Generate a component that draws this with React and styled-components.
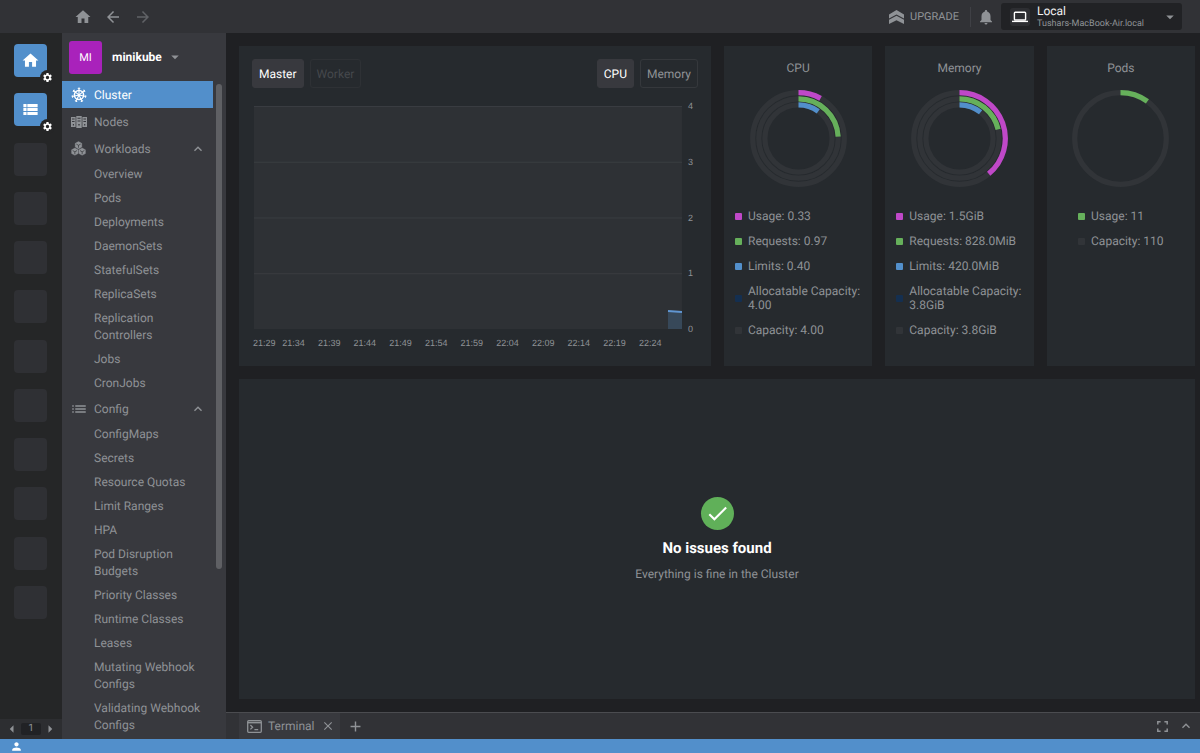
import React, { useState } from 'react';
import styled, { createGlobalStyle } from 'styled-components';
import {
  MdHome,
  MdArrowBack,
  MdArrowForward,
  MdNotifications,
  MdArrowDropDown,
  MdArrowLeft,
  MdArrowRight,
  MdSettings,
  MdViewList,
  MdList,
  MdExpandLess,
  MdAdd,
  MdClose,
  MdPerson,
  MdCheck,
} from 'react-icons/md';

const GlobalStyle = createGlobalStyle`
  * {
    box-sizing: border-box;
  }

  body {
    margin: 0;
    background: #1f2023;
    color: #8f9296;
    font-family: Roboto, "Liberation Sans", sans-serif;
    font-size: 12px;
    text-rendering: geometricPrecision;
  }

  button {
    border: 0;
    padding: 0;
    background: none;
    color: inherit;
    font: inherit;
    text-rendering: inherit;
    cursor: pointer;
  }

  ul {
    list-style: none;
    margin: 0;
    padding: 0;
  }

  svg {
    display: block;
    flex: none;
  }
`;

const workloads = ['Overview', 'Pods', 'Deployments', 'DaemonSets', 'StatefulSets', 'ReplicaSets', 'Replication Controllers', 'Jobs', 'CronJobs'];
const config = ['ConfigMaps', 'Secrets', 'Resource Quotas', 'Limit Ranges', 'HPA', 'Pod Disruption Budgets', 'Priority Classes', 'Runtime Classes', 'Leases', 'Mutating Webhook Configs', 'Validating Webhook Configs'];
const times = ['21:29', '21:34', '21:39', '21:44', '21:49', '21:54', '21:59', '22:04', '22:09', '22:14', '22:19', '22:24'];

const colors = {
  usage: '#bf48c8',
  requests: '#66b05b',
  limits: '#528fcb',
  allocatable: '#142f50',
  capacity: '#313438',
};

const gauges = [
  {
    title: 'CPU',
    rings: [[colors.usage, 0.08], [colors.requests, 0.2425], [colors.limits, 0.1]],
    legend: [
      [colors.usage, 'Usage: 0.33'],
      [colors.requests, 'Requests: 0.97'],
      [colors.limits, 'Limits: 0.40'],
      [colors.allocatable, 'Allocatable Capacity: 4.00'],
      [colors.capacity, 'Capacity: 4.00'],
    ],
  },
  {
    title: 'Memory',
    rings: [[colors.usage, 0.39], [colors.requests, 0.213], [colors.limits, 0.108]],
    legend: [
      [colors.usage, 'Usage: 1.5GiB'],
      [colors.requests, 'Requests: 828.0MiB'],
      [colors.limits, 'Limits: 420.0MiB'],
      [colors.allocatable, 'Allocatable Capacity: 3.8GiB'],
      [colors.capacity, 'Capacity: 3.8GiB'],
    ],
  },
  {
    title: 'Pods',
    rings: [[colors.requests, 0.1]],
    legend: [
      [colors.requests, 'Usage: 11'],
      [colors.capacity, 'Capacity: 110'],
    ],
  },
];

function HelmIcon() {
  const spokes = [0, 1, 2, 3, 4, 5, 6];
  return (
    <svg width="16" height="16" viewBox="0 0 16 16" fill="none" stroke="currentColor">
      <circle cx="8" cy="8" r="4.6" strokeWidth="1.5" />
      <circle cx="8" cy="8" r="1.3" fill="currentColor" stroke="none" />
      {spokes.map((n) => (
        <path key={n} d="M8 7V1M7.2 1.2h1.6" strokeWidth="1.1" strokeLinecap="round" transform={`rotate(${(n * 360) / 7} 8 8)`} />
      ))}
    </svg>
  );
}

function NodesIcon() {
  return (
    <svg width="16" height="12" viewBox="0 0 16 12" fill="currentColor" fillRule="evenodd">
      <path d="M0 1h4.6v10H0zM1 2.6v1h2.6v-1zM1 5v1h2.6V5zM1.8 8v1.4h1.2V8z" />
      <path d="M5.3 0h5.4v12H5.3zM6.5 1.8v1h3v-1zM6.5 4.4v1h3v-1zM7.3 8v1.6h1.4V8z" />
      <path d="M11.4 1H16v10h-4.6zM12.4 2.6v1H15v-1zM12.4 5v1H15V5zM13.1 8v1.4h1.2V8z" />
    </svg>
  );
}

function WorkloadsIcon() {
  const cubes = [[8, 4], [4.1, 10.9], [11.9, 10.9]];
  return (
    <svg width="15" height="15" viewBox="0 0 16 15">
      {cubes.map(([x, y]) => (
        <g key={x} transform={`translate(${x} ${y})`}>
          <path d="M0-3.9 3.5-2v4L0 3.9-3.5 2v-4z" fill="currentColor" stroke="currentColor" strokeWidth=".4" strokeLinejoin="round" />
          <path d="M-2.3-1.2 0 .1l2.3-1.3M0 .1v2.6" fill="none" stroke="#38393e" strokeWidth=".8" />
        </g>
      ))}
    </svg>
  );
}

function UpgradeIcon() {
  return (
    <svg width="15" height="14" viewBox="0 0 15 14" fill="currentColor">
      <path d="M7.5 0 15 4.4v4.2L7.5 4.6 0 8.6V4.4z" />
      <path d="M7.5 5.8 15 9.8V14l-7.5-3.8L0 14V9.8z" />
    </svg>
  );
}

function LaptopIcon() {
  return (
    <svg width="16" height="12" viewBox="0 0 16 12" fill="none" stroke="currentColor" strokeWidth="1.4">
      <rect x="2.4" y="1.2" width="11.2" height="7.8" rx=".8" />
      <path d="M0 10.4h16" />
    </svg>
  );
}

function TerminalIcon() {
  return (
    <svg width="15" height="13" viewBox="0 0 15 13" fill="none" stroke="currentColor" strokeWidth="1.3">
      <rect x=".7" y=".7" width="13.6" height="11.6" rx="1" />
      <path d="M.7 2.6h13.6" strokeWidth="1.6" />
      <path d="m3.4 5 2.2 2.2-2.2 2.2M7.4 9.6h3.8" />
    </svg>
  );
}

function FullscreenIcon() {
  return (
    <svg width="11" height="11" viewBox="0 0 11 11" fill="none" stroke="currentColor" strokeWidth="1.5">
      <path d="M.8 3.6V.8h2.8M7.4.8h2.8v2.8M10.2 7.4v2.8H7.4M3.6 10.2H.8V7.4" />
    </svg>
  );
}

function Donut({ rings }) {
  return (
    <svg width="97" height="97" viewBox="-48.5 -48.5 97 97" fill="none" strokeWidth="5.2">
      {rings.map(([color, value], i) => {
        const r = 45.8 - i * 6.1;
        const a = value * Math.PI * 2;
        return (
          <g key={color}>
            <circle r={r} stroke={colors.capacity} />
            <path d={`M0 ${-r}A${r} ${r} 0 0 1 ${r * Math.sin(a)} ${-r * Math.cos(a)}`} stroke={color} />
          </g>
        );
      })}
    </svg>
  );
}

function Group({ icon, title, items }) {
  const [open, setOpen] = useState(true);
  return (
    <li>
      <NavItem onClick={() => setOpen(!open)} aria-expanded={open}>
        <NavIcon>{icon}</NavIcon>
        {title}
        <Chevron size={16} />
      </NavItem>
      {open && (
        <ul>
          {items.map((item) => (
            <li key={item}>
              <SubLink href="#">{item}</SubLink>
            </li>
          ))}
        </ul>
      )}
    </li>
  );
}

function App() {
  const [role, setRole] = useState('Master');
  const [metric, setMetric] = useState('CPU');

  return (
    <Shell>
      <GlobalStyle />
      <TopBar>
        <History>
          <IconButton aria-label="Home"><MdHome size={18} /></IconButton>
          <IconButton aria-label="Back"><MdArrowBack size={18} /></IconButton>
          <IconButton aria-label="Forward" $dim><MdArrowForward size={18} /></IconButton>
        </History>
        <Upgrade>
          <UpgradeIcon />
          UPGRADE
        </Upgrade>
        <Divider />
        <IconButton aria-label="Notifications"><MdNotifications size={18} /></IconButton>
        <Device>
          <DeviceIcon><LaptopIcon /></DeviceIcon>
          <DeviceText>
            <strong>Local</strong>
            <small>Tushars-MacBook-Air.local</small>
          </DeviceText>
          <MdArrowDropDown size={18} />
        </Device>
      </TopBar>

      <Body>
        <Hotbar>
          <Tiles>
            <Tile $active aria-label="Catalog">
              <MdHome size={19} />
              <Badge><MdSettings size={11} /></Badge>
            </Tile>
            <Tile $active aria-label="Cluster list">
              <MdViewList size={19} />
              <Badge><MdSettings size={11} /></Badge>
            </Tile>
            {[...Array(10)].map((_, i) => (
              <Tile key={i} aria-label="Empty slot" />
            ))}
          </Tiles>
          <Pager>
            <IconButton aria-label="Previous"><MdArrowLeft size={18} /></IconButton>
            <PageNumber>1</PageNumber>
            <IconButton aria-label="Next"><MdArrowRight size={18} /></IconButton>
          </Pager>
        </Hotbar>

        <Sidebar>
          <ClusterHeader>
            <Avatar>MI</Avatar>
            minikube
            <MdArrowDropDown size={18} />
          </ClusterHeader>
          <NavArea>
            <NavList>
              <li>
                <NavItem $active>
                  <NavIcon><HelmIcon /></NavIcon>
                  Cluster
                </NavItem>
              </li>
              <li>
                <NavItem>
                  <NavIcon><NodesIcon /></NavIcon>
                  Nodes
                </NavItem>
              </li>
              <Group icon={<WorkloadsIcon />} title="Workloads" items={workloads} />
              <Group icon={<MdList size={18} />} title="Config" items={config} />
            </NavList>
            <Track>
              <Thumb />
            </Track>
          </NavArea>
        </Sidebar>

        <Main>
          <Dashboard>
            <Card>
              <Toolbar>
                <Toggle $on={role === 'Master'} onClick={() => setRole('Master')}>Master</Toggle>
                <Toggle disabled>Worker</Toggle>
                <Spacer />
                <Toggle $on={metric === 'CPU'} onClick={() => setMetric('CPU')}>CPU</Toggle>
                <Toggle $on={metric === 'Memory'} onClick={() => setMetric('Memory')}>Memory</Toggle>
              </Toolbar>
              <Chart>
                <Plot viewBox="0 0 428 224" preserveAspectRatio="none">
                  <rect width="428" height="224" fill="#2e3135" />
                  <path d="M0 .5h428M0 56.5h428M0 112.5h428M0 168.5h428" stroke="#3a3d41" />
                  <path d="M414 206h14v18h-14z" fill="#374859" />
                  <path d="M414 206l14 1" stroke="#6096d2" strokeWidth="2" />
                </Plot>
                <YAxis>
                  {[4, 3, 2, 1, 0].map((n) => <span key={n}>{n}</span>)}
                </YAxis>
                <XAxis>
                  {times.map((t) => <span key={t}>{t}</span>)}
                </XAxis>
              </Chart>
            </Card>

            {gauges.map((gauge) => (
              <GaugeCard key={gauge.title}>
                <GaugeTitle>{gauge.title}</GaugeTitle>
                <Donut rings={gauge.rings} />
                <Legend>
                  {gauge.legend.map(([color, text]) => (
                    <LegendItem key={text} $color={color}>{text}</LegendItem>
                  ))}
                </Legend>
              </GaugeCard>
            ))}

            <Issues>
              <CheckCircle><MdCheck size={25} /></CheckCircle>
              <h2>No issues found</h2>
              <p>Everything is fine in the Cluster</p>
            </Issues>
          </Dashboard>

          <Dock>
            <DockTab>
              <TerminalIcon />
              Terminal
              <IconButton aria-label="Close tab"><MdClose size={14} /></IconButton>
            </DockTab>
            <IconButton aria-label="New tab"><MdAdd size={17} /></IconButton>
            <Spacer />
            <DockActions>
              <IconButton aria-label="Fullscreen"><FullscreenIcon /></IconButton>
              <IconButton aria-label="Expand"><MdExpandLess size={16} /></IconButton>
            </DockActions>
          </Dock>
        </Main>
      </Body>

      <StatusBar>
        <MdPerson size={13} />
      </StatusBar>
    </Shell>
  );
}

const Shell = styled.div`
  display: flex;
  flex-direction: column;
  height: 100vh;
  overflow: hidden;
`;

const TopBar = styled.header`
  display: flex;
  align-items: center;
  flex: none;
  height: 33px;
  padding-right: 18px;
  background: #313236;
`;

const History = styled.div`
  display: flex;
  gap: 12px;
  flex: 1;
  padding-left: 74px;
`;

const IconButton = styled.button`
  display: flex;
  align-items: center;
  justify-content: center;
  opacity: ${(props) => (props.$dim ? 0.5 : 1)};
`;

const Upgrade = styled.button`
  display: flex;
  align-items: center;
  gap: 6px;
  font-size: 11px;
`;

const Divider = styled.div`
  width: 1px;
  height: 20px;
  margin: 0 6px 0 11px;
  background: #3f4045;
`;

const Device = styled.button`
  display: flex;
  align-items: center;
  width: 181px;
  height: 27px;
  margin-left: 6px;
  padding: 0 3px 0 9px;
  border-radius: 3px;
  background: #212225;
  text-align: left;
`;

const DeviceIcon = styled.span`
  display: flex;
  align-items: center;
  justify-content: center;
  width: 20px;
  height: 18px;
  border-radius: 3px;
  background: #2d2e32;
  color: #fff;
`;

const DeviceText = styled.span`
  display: flex;
  flex-direction: column;
  flex: 1;
  padding-left: 7px;

  strong {
    color: #f0f0f0;
    font-size: 12px;
    font-weight: 400;
    line-height: 14px;
  }

  small {
    font-size: 9px;
    line-height: 12px;
  }
`;

const Body = styled.div`
  display: flex;
  flex: 1;
  min-height: 0;
`;

const Hotbar = styled.aside`
  display: flex;
  flex-direction: column;
  justify-content: space-between;
  flex: none;
  width: 62px;
  background: #252627;
`;

const Tiles = styled.div`
  display: flex;
  flex-direction: column;
  justify-content: space-between;
  height: 586px;
  padding: 11px 0 0 14px;
`;

const Tile = styled.button`
  position: relative;
  display: flex;
  align-items: center;
  justify-content: center;
  width: 33px;
  height: 33px;
  border-radius: 4px;
  background: ${(props) => (props.$active ? '#528fcb' : '#2f3034')};
  color: #fff;
`;

const Badge = styled.span`
  position: absolute;
  right: -8px;
  bottom: -8px;
  padding: 2px;
  border-radius: 50%;
  background: #252627;
`;

const Pager = styled.div`
  display: flex;
  align-items: center;
  justify-content: center;
  height: 20px;
  background: #2d2e31;
`;

const PageNumber = styled.span`
  width: 20px;
  border-radius: 2px;
  background: #212225;
  font-size: 10px;
  line-height: 12px;
  text-align: center;
`;

const Sidebar = styled.aside`
  display: flex;
  flex-direction: column;
  flex: none;
  width: 164px;
  background: #38393e;
`;

const ClusterHeader = styled.button`
  display: flex;
  align-items: center;
  flex: none;
  height: 48px;
  padding-left: 7px;
  color: #fff;
  font-weight: 700;

  > svg {
    margin-left: 4px;
    color: #8f9296;
  }
`;

const Avatar = styled.span`
  width: 33px;
  margin-right: 10px;
  border-radius: 3px;
  background: #a922bb;
  font-size: 11px;
  font-weight: 400;
  line-height: 33px;
`;

const NavArea = styled.nav`
  display: flex;
  flex: 1;
  min-height: 0;
  overflow: hidden;
`;

const NavList = styled.ul`
  flex: 1;
  min-width: 0;
`;

const NavItem = styled.button`
  display: flex;
  align-items: center;
  width: 100%;
  height: 27px;
  padding: 0 7px 0 8px;
  background: ${(props) => (props.$active ? '#528fcb' : 'none')};
  color: ${(props) => (props.$active ? '#fff' : 'inherit')};
`;

const NavIcon = styled.span`
  display: flex;
  justify-content: center;
  width: 17px;
  margin-right: 7px;
`;

const Chevron = styled(MdExpandLess)`
  margin-left: auto;
`;

const SubLink = styled.a`
  display: block;
  padding: 4px 12px 3px 32px;
  color: inherit;
  line-height: 17px;
  text-decoration: none;
`;

const Track = styled.div`
  width: 13px;
  padding: 3px 4px 0 3px;
`;

const Thumb = styled.div`
  height: 74%;
  border-radius: 3px;
  background: #5f6064;
`;

const Main = styled.main`
  display: flex;
  flex-direction: column;
  flex: 1;
  min-width: 0;
`;

const Dashboard = styled.div`
  display: grid;
  grid-template-columns: 35fr 11fr 11fr 11fr;
  grid-template-rows: repeat(2, minmax(0, 1fr));
  gap: 13px;
  flex: 1;
  min-height: 0;
  padding: 13px 5px 13px 13px;
`;

const Card = styled.section`
  display: flex;
  flex-direction: column;
  min-width: 0;
  padding: 13px;
  background: #262a2e;
`;

const Toolbar = styled.div`
  display: flex;
  gap: 6px;
`;

const Spacer = styled.div`
  flex: 1;
`;

const Toggle = styled.button`
  height: 29px;
  padding: 0 6px;
  border: 1px solid ${(props) => (props.$on ? '#38393e' : '#35383c')};
  border-radius: 3px;
  background: ${(props) => (props.$on ? '#38393e' : 'transparent')};
  color: ${(props) => (props.$on ? '#fff' : '#8f9296')};

  &:disabled {
    border-color: #2e3135;
    color: #45484c;
  }
`;

const Chart = styled.div`
  display: grid;
  grid-template-columns: 1fr 16px;
  grid-template-rows: minmax(0, 1fr) 24px;
  flex: 1;
  min-height: 0;
  padding: 18px 0 0 2px;
  font-family: "Liberation Sans", Arial, sans-serif;
  font-size: 9px;
  line-height: 12px;
`;

const Plot = styled.svg`
  width: 100%;
  height: 100%;
  min-height: 0;
`;

const YAxis = styled.div`
  display: flex;
  flex-direction: column;
  justify-content: space-between;
  margin: -6px 0;
  padding-left: 6px;
`;

const XAxis = styled.div`
  display: grid;
  grid-template-columns: repeat(12, 1fr);
  margin: 8px 14px 0 -14px;
  text-align: center;

  span:first-child {
    padding-left: 13px;
  }
`;

const GaugeCard = styled(Card)`
  align-items: center;
  padding: 13px 11px;
`;

const GaugeTitle = styled.div`
  margin-bottom: 13px;
  line-height: 18px;
`;

const Legend = styled.ul`
  display: flex;
  flex-direction: column;
  gap: 11px;
  margin-top: 22px;
`;

const LegendItem = styled.li`
  display: flex;
  align-items: center;
  gap: 6px;
  line-height: 14px;

  &::before {
    content: '';
    flex: none;
    width: 7px;
    height: 7px;
    border-radius: 1px;
    background: ${(props) => props.$color};
  }
`;

const Issues = styled(Card)`
  grid-column: 1 / -1;
  align-items: center;
  justify-content: center;

  h2 {
    margin: 8px 0;
    color: #fff;
    font-size: 15px;
    font-weight: 700;
    line-height: 20px;
  }

  p {
    margin: 0;
    line-height: 16px;
  }
`;

const CheckCircle = styled.div`
  display: flex;
  align-items: center;
  justify-content: center;
  width: 33px;
  height: 33px;
  border-radius: 50%;
  background: #60b059;
  color: #fff;
`;

const Dock = styled.footer`
  display: flex;
  flex: none;
  height: 27px;
  padding: 0 6px 0 13px;
  border-top: 1px solid #4b4c50;
  background: #313236;
`;

const DockTab = styled.div`
  display: flex;
  align-items: center;
  gap: 6px;
  margin-right: 7px;
  padding: 0 5px 0 8px;
  background: #38393e;
`;

const DockActions = styled.div`
  display: flex;
  gap: 10px;
`;

const StatusBar = styled.div`
  display: flex;
  align-items: center;
  flex: none;
  height: 14px;
  padding-left: 10px;
  background: #528fcb;
  color: #fff;
`;

export default App;
